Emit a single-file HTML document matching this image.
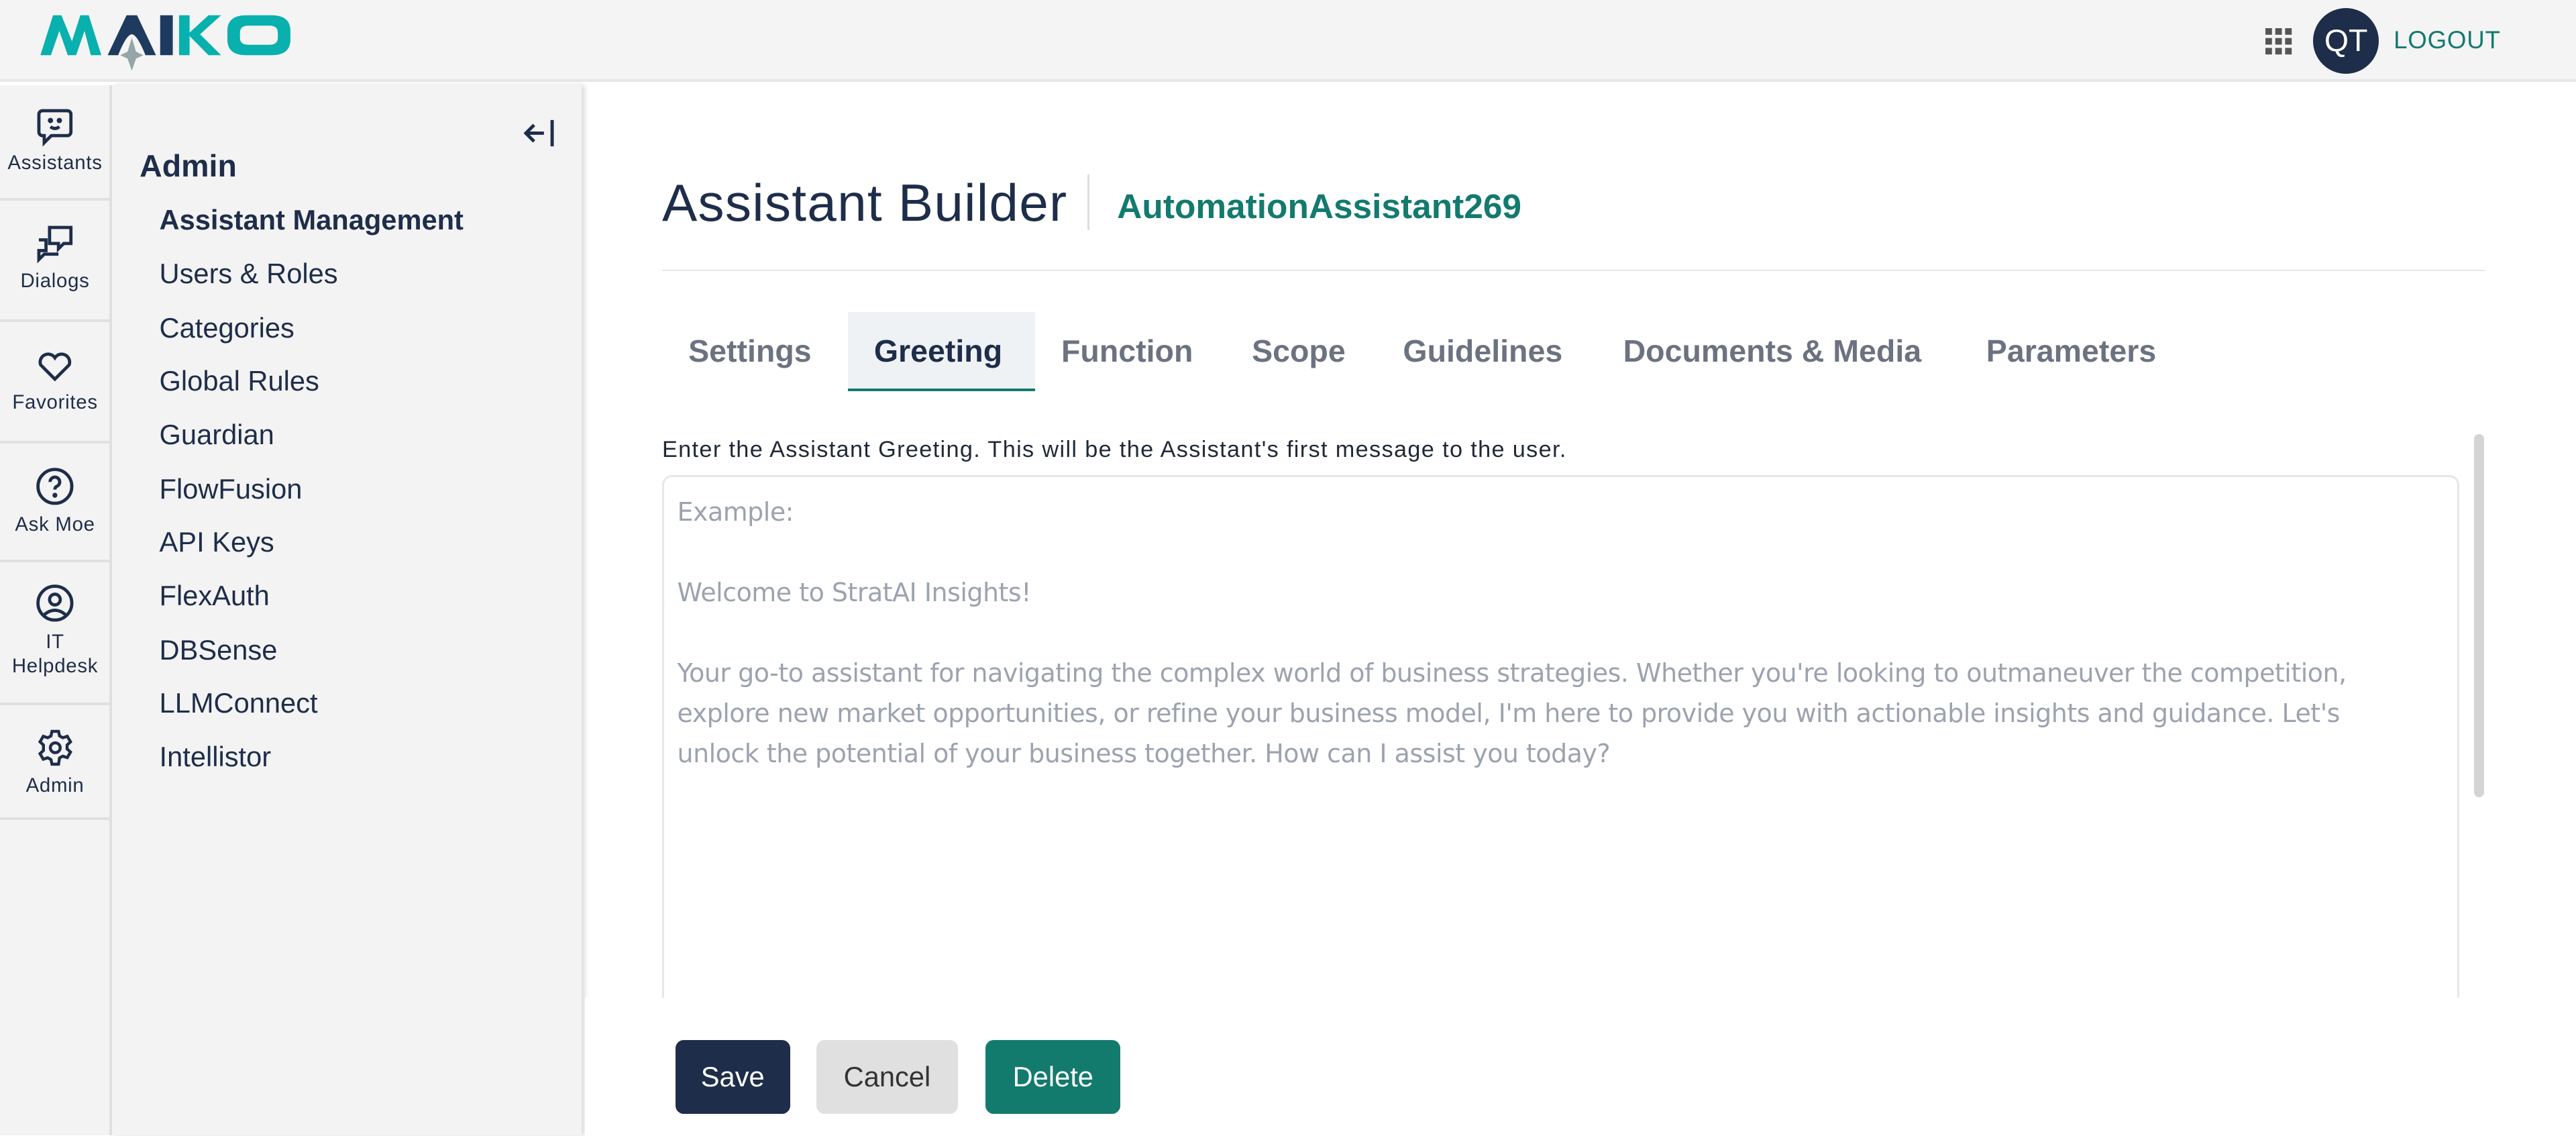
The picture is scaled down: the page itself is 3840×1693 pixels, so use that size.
<!DOCTYPE html>
<html><head><meta charset="utf-8"><style>
*{box-sizing:border-box;margin:0;padding:0}
html,body{width:3840px;height:1693px;overflow:hidden;background:#fff}
#w{zoom:2.44898;width:1568px;height:691px;position:relative;font-family:"Liberation Sans",sans-serif;color:#1e2d4a}
.a{position:absolute}
.rail div.it{position:absolute;left:0;width:67px;border-bottom:2px solid #e0e0e0;text-align:center;font-size:12px;color:#1e2d4a;letter-spacing:.3px}
.side a{display:block;position:absolute;left:97px;font-size:17px;color:#1e2d4a}
.tab{position:absolute;top:190px;height:48px;line-height:48px;font-size:19px;font-weight:bold;color:#6b7280;padding:0 16px}
.ph{font-family:"DejaVu Sans",sans-serif;font-size:15.5px;color:#9ca3af;line-height:24.5px;letter-spacing:-.2px}
.btn{position:absolute;top:633px;height:45px;line-height:45px;border-radius:5px;text-align:center;font-size:17px}
</style></head><body><div id="w">
<div class="a" style="left:0;top:0;width:1568px;height:50px;background:#f4f4f4;border-bottom:2px solid #e5e7eb"></div>
<svg class="a" style="left:22px;top:6px" width="156" height="38" viewBox="0 0 122 36" preserveAspectRatio="none">
<path d="M2 26 L8 3 L12 3 L17 18 L21 3 L25 3 L31 26 L26 26 L23 12 L19 26 L15 26 L11 12 L7 26Z" fill="#08b0ae"/>
<path d="M34 26 L43 3 L48 3 L57 26 L52 26 Q48 14 45.5 14 Q43 14 39 26Z" fill="#1e3a5f"/>
<path d="M45.5 16 L47.5 24 L51 26 L47.5 28 L45.5 35 L43.5 28 L40 26 L43.5 24Z" fill="#95a5a8"/>
<rect x="59" y="3" width="6" height="23" fill="#1e3a5f"/>
<path d="M68 3 L73 3 L73 13 L82 3 L88 3 L78 14 L88 26 L82 26 L73 15 L73 26 L68 26Z" fill="#08b0ae"/>
<path d="M100 3 L112 3 Q121 3 121 12 L121 17 Q121 26 112 26 L100 26 Q91 26 91 17 L91 12 Q91 3 100 3Z M101 9 Q97 9 97 13 L97 16 Q97 20 101 20 L111 20 Q115 20 115 16 L115 13 Q115 9 111 9Z" fill="#08b0ae" fill-rule="evenodd"/>
</svg>
<svg class="a" style="left:1379px;top:17px" width="17" height="17" viewBox="0 0 17 17" fill="#555"><rect x="0" y="0" width="4" height="4"/><rect x="6" y="0" width="4" height="4"/><rect x="12" y="0" width="4" height="4"/><rect x="0" y="6" width="4" height="4"/><rect x="6" y="6" width="4" height="4"/><rect x="12" y="6" width="4" height="4"/><rect x="0" y="12" width="4" height="4"/><rect x="6" y="12" width="4" height="4"/><rect x="12" y="12" width="4" height="4"/></svg>
<div class="a" style="left:1408px;top:5px;width:40px;height:40px;border-radius:50%;background:#1e2d4a;color:#fff;font-size:19px;line-height:40px;text-align:center">QT</div>
<div class="a" style="left:1457px;top:16px;font-size:15px;color:#137a6e;letter-spacing:.3px">LOGOUT</div>

<div class="a rail" style="left:0;top:52px;width:68px;height:639px;background:#f3f3f3;border-right:2px solid #e0e0e0">
<div class="it" style="top:0;height:70px"><svg style="margin-top:12px" width="26" height="26" viewBox="0 0 24 24" fill="none" stroke="#1e2d4a" stroke-width="1.8"><path d="M5 3h14a2 2 0 0 1 2 2v10a2 2 0 0 1-2 2h-9l-4 4v-4H5a2 2 0 0 1-2-2V5a2 2 0 0 1 2-2z"/><circle cx="9.5" cy="8.5" r=".6" fill="#1e2d4a"/><circle cx="14.5" cy="8.5" r=".6" fill="#1e2d4a"/><path d="M9.5 12q2.5 2 5 0"/></svg><div style="margin-top:-1px">Assistants</div></div>
<div class="it" style="top:71px;height:73px"><svg style="margin-top:12px" width="26" height="26" viewBox="0 0 24 24" fill="none" stroke="#1e2d4a" stroke-width="1.8"><path d="M9 3h12v9h-4l-3 3v-3H9z"/><path d="M3 10h4v6H3v5l3-3h8"/></svg><div>Dialogs</div></div>
<div class="it" style="top:145px;height:73px"><svg style="margin-top:12px" width="26" height="26" viewBox="0 0 24 24" fill="none" stroke="#1e2d4a" stroke-width="1.8"><path d="M12 20l-8-8a4.5 4.5 0 0 1 8-4 4.5 4.5 0 0 1 8 4z"/></svg><div>Favorites</div></div>
<div class="it" style="top:219px;height:71px"><svg style="margin-top:12px" width="26" height="26" viewBox="0 0 24 24" fill="none" stroke="#1e2d4a" stroke-width="1.8"><circle cx="12" cy="12" r="9.5"/><path d="M9.3 9.5a2.7 2.7 0 1 1 3.7 2.5c-.8.4-1 1-1 1.8"/><circle cx="12" cy="17" r=".5" fill="#1e2d4a"/></svg><div>Ask Moe</div></div>
<div class="it" style="top:291px;height:86px"><svg style="margin-top:11px" width="26" height="26" viewBox="0 0 24 24" fill="none" stroke="#1e2d4a" stroke-width="1.8"><circle cx="12" cy="12" r="9.5"/><circle cx="12" cy="10" r="3"/><path d="M6 18.5q6-5 12 0"/></svg><div style="line-height:15px">IT<br>Helpdesk</div></div>
<div class="it" style="top:378px;height:69px"><svg style="margin-top:13px" width="24" height="24" viewBox="0 0 24 24" fill="none" stroke="#1e2d4a" stroke-width="1.8"><circle cx="12" cy="12" r="3"/><path d="M10 2h4l.6 2.8 2 1.1 2.7-.9 2 3.4-2.1 1.9v2.4l2.1 1.9-2 3.4-2.7-.9-2 1.1L14 22h-4l-.6-2.8-2-1.1-2.7.9-2-3.4 2.1-1.9V10.3L2.7 8.4l2-3.4 2.7.9 2-1.1z"/></svg><div style="margin-top:1px">Admin</div></div>
</div>

<div class="a side" style="left:68px;top:52px;width:286px;height:639px;background:#f3f3f3;box-shadow:2px 0 3px rgba(0,0,0,.15)"></div>
<div class="side">
<svg class="a" style="left:318px;top:71px" width="22" height="20" viewBox="0 0 22 20" fill="none" stroke="#1e2d4a" stroke-width="2"><path d="M18 2v16M13 10H3M7 5l-5 5 5 5"/></svg>
<div class="a" style="left:85px;top:90px;font-size:19px;font-weight:bold">Admin</div>
<a style="top:124px;font-weight:bold">Assistant Management</a>
<a style="top:157px">Users &amp; Roles</a>
<a style="top:190px">Categories</a>
<a style="top:222px">Global Rules</a>
<a style="top:255px">Guardian</a>
<a style="top:288px">FlowFusion</a>
<a style="top:320px">API Keys</a>
<a style="top:353px">FlexAuth</a>
<a style="top:386px">DBSense</a>
<a style="top:418px">LLMConnect</a>
<a style="top:451px">Intellistor</a>
</div>

<div class="a" style="left:403px;top:105px;font-size:32px;color:#1e2d4a;letter-spacing:.5px">Assistant Builder</div>
<div class="a" style="left:662px;top:106px;width:1px;height:34px;background:#ddd"></div>
<div class="a" style="left:680px;top:113px;font-size:21px;font-weight:bold;color:#137a6e">AutomationAssistant269</div>
<div class="a" style="left:403px;top:164px;width:1110px;height:1px;background:#e5e7eb"></div>

<div class="tab" style="left:403px">Settings</div>
<div class="tab" style="left:516px;width:114px;background:#eef2f5;color:#1e2d4a;border-bottom:2px solid #137a6e">Greeting</div>
<div class="tab" style="left:630px">Function</div>
<div class="tab" style="left:746px">Scope</div>
<div class="tab" style="left:838px">Guidelines</div>
<div class="tab" style="left:972px">Documents &amp; Media</div>
<div class="tab" style="left:1193px">Parameters</div>

<div class="a" style="left:403px;top:266px;font-size:14px;color:#1f2937;letter-spacing:.55px">Enter the Assistant Greeting. This will be the Assistant's first message to the user.</div>
<div class="a" style="left:403px;top:289px;width:1094px;height:340px;border:1.5px solid #e5e7eb;border-radius:6px;padding:9px 46px 9px 8px">
<div class="ph">Example:</div><div class="ph">&nbsp;</div><div class="ph">Welcome to StratAI Insights!</div><div class="ph">&nbsp;</div>
<div class="ph">Your go-to assistant for navigating the complex world of business strategies. Whether you're looking to outmaneuver the competition, explore new market opportunities, or refine your business model, I'm here to provide you with actionable insights and guidance. Let's unlock the potential of your business together. How can I assist you today?</div>
</div>
<div class="a" style="top:607px;width:1212px;height:84px;background:#fff;left:356px"></div>
<div class="a" style="left:1506px;top:264px;width:6px;height:221px;border-radius:3px;background:#d4d4d4"></div>

<div class="btn" style="left:411px;width:70px;background:#1e2d4a;color:#fff">Save</div>
<div class="btn" style="left:497px;width:86px;background:#e0e0e0;color:#333">Cancel</div>
<div class="btn" style="left:600px;width:82px;background:#137a6e;color:#fff">Delete</div>
</div></body></html>
